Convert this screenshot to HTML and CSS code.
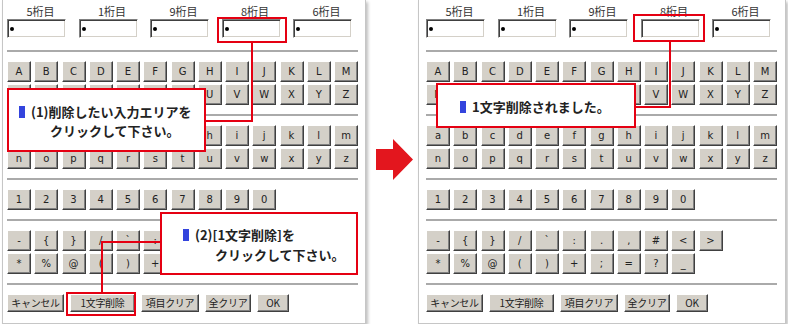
FILE: index.html
```html
<!DOCTYPE html>
<html lang="ja">
<head>
  <meta charset="UTF-8">
  <title>1文字削除の手順</title>
  <link rel="stylesheet" href="styles.css">
</head>
<body>
  <div class="steps">

    <!-- before -->
    <div class="panel panel-before">
      <div class="digits">
        <div class="digit"><div class="digit-label">5桁目</div><div class="digit-input"><span class="dot"></span></div></div>
        <div class="digit"><div class="digit-label">1桁目</div><div class="digit-input"><span class="dot"></span></div></div>
        <div class="digit"><div class="digit-label">9桁目</div><div class="digit-input"><span class="dot"></span></div></div>
        <div class="digit"><div class="digit-label">8桁目</div><div class="digit-input"><span class="dot"></span></div></div>
        <div class="digit"><div class="digit-label">6桁目</div><div class="digit-input"><span class="dot"></span></div></div>
      </div>
      <hr class="rule">
      <div class="key-row"><button class="key">A</button><button class="key">B</button><button class="key">C</button><button class="key">D</button><button class="key">E</button><button class="key">F</button><button class="key">G</button><button class="key">H</button><button class="key">I</button><button class="key">J</button><button class="key">K</button><button class="key">L</button><button class="key">M</button></div>
      <div class="key-row"><button class="key">N</button><button class="key">O</button><button class="key">P</button><button class="key">Q</button><button class="key">R</button><button class="key">S</button><button class="key">T</button><button class="key">U</button><button class="key">V</button><button class="key">W</button><button class="key">X</button><button class="key">Y</button><button class="key">Z</button></div>
      <hr class="rule">
      <div class="key-row"><button class="key">a</button><button class="key">b</button><button class="key">c</button><button class="key">d</button><button class="key">e</button><button class="key">f</button><button class="key">g</button><button class="key">h</button><button class="key">i</button><button class="key">j</button><button class="key">k</button><button class="key">l</button><button class="key">m</button></div>
      <div class="key-row"><button class="key">n</button><button class="key">o</button><button class="key">p</button><button class="key">q</button><button class="key">r</button><button class="key">s</button><button class="key">t</button><button class="key">u</button><button class="key">v</button><button class="key">w</button><button class="key">x</button><button class="key">y</button><button class="key">z</button></div>
      <hr class="rule">
      <div class="key-row"><button class="key">1</button><button class="key">2</button><button class="key">3</button><button class="key">4</button><button class="key">5</button><button class="key">6</button><button class="key">7</button><button class="key">8</button><button class="key">9</button><button class="key">0</button></div>
      <hr class="rule">
      <div class="key-row"><button class="key">-</button><button class="key">{</button><button class="key">}</button><button class="key">/</button><button class="key">`</button><button class="key">:</button><button class="key">.</button><button class="key">,</button><button class="key">#</button><button class="key">&lt;</button><button class="key">&gt;</button></div>
      <div class="key-row"><button class="key">*</button><button class="key">%</button><button class="key">@</button><button class="key">(</button><button class="key">)</button><button class="key">+</button><button class="key">;</button><button class="key">=</button><button class="key">?</button><button class="key">_</button></div>
      <hr class="rule">
      <div class="actions">
        <button class="btn btn-cancel">キャンセル</button>
        <button class="btn btn-delete">1文字削除</button>
        <button class="btn btn-clear">項目クリア</button>
        <button class="btn btn-all">全クリア</button>
        <button class="btn btn-ok">OK</button>
      </div>

      <div class="mark mark-input"></div>
      <div class="wire wire-1v"></div>
      <div class="wire wire-1h"></div>
      <div class="callout callout-1">
        <div class="callout-line line-1a"><span class="bullet"></span>(1)削除したい入力エリアを</div>
        <div class="callout-line line-1b">クリックして下さい。</div>
      </div>

      <div class="mark mark-delete"></div>
      <div class="wire wire-2v"></div>
      <div class="wire wire-2h"></div>
      <div class="callout callout-2">
        <div class="callout-line line-2a"><span class="bullet"></span>(2)[1文字削除]を</div>
        <div class="callout-line line-2b">クリックして下さい。</div>
      </div>
    </div>

    <div class="arrow">
      <svg width="37" height="41" viewBox="0 0 37 41"><polygon points="0,10 17,10 17,0 37,20.5 17,41 17,31 0,31" fill="#e3161e"/></svg>
    </div>

    <!-- after -->
    <div class="panel panel-after">
      <div class="digits">
        <div class="digit"><div class="digit-label">5桁目</div><div class="digit-input"><span class="dot"></span></div></div>
        <div class="digit"><div class="digit-label">1桁目</div><div class="digit-input"><span class="dot"></span></div></div>
        <div class="digit"><div class="digit-label">9桁目</div><div class="digit-input"><span class="dot"></span></div></div>
        <div class="digit"><div class="digit-label">8桁目</div><div class="digit-input"></div></div>
        <div class="digit"><div class="digit-label">6桁目</div><div class="digit-input"><span class="dot"></span></div></div>
      </div>
      <hr class="rule">
      <div class="key-row"><button class="key">A</button><button class="key">B</button><button class="key">C</button><button class="key">D</button><button class="key">E</button><button class="key">F</button><button class="key">G</button><button class="key">H</button><button class="key">I</button><button class="key">J</button><button class="key">K</button><button class="key">L</button><button class="key">M</button></div>
      <div class="key-row"><button class="key">N</button><button class="key">O</button><button class="key">P</button><button class="key">Q</button><button class="key">R</button><button class="key">S</button><button class="key">T</button><button class="key">U</button><button class="key">V</button><button class="key">W</button><button class="key">X</button><button class="key">Y</button><button class="key">Z</button></div>
      <hr class="rule">
      <div class="key-row"><button class="key">a</button><button class="key">b</button><button class="key">c</button><button class="key">d</button><button class="key">e</button><button class="key">f</button><button class="key">g</button><button class="key">h</button><button class="key">i</button><button class="key">j</button><button class="key">k</button><button class="key">l</button><button class="key">m</button></div>
      <div class="key-row"><button class="key">n</button><button class="key">o</button><button class="key">p</button><button class="key">q</button><button class="key">r</button><button class="key">s</button><button class="key">t</button><button class="key">u</button><button class="key">v</button><button class="key">w</button><button class="key">x</button><button class="key">y</button><button class="key">z</button></div>
      <hr class="rule">
      <div class="key-row"><button class="key">1</button><button class="key">2</button><button class="key">3</button><button class="key">4</button><button class="key">5</button><button class="key">6</button><button class="key">7</button><button class="key">8</button><button class="key">9</button><button class="key">0</button></div>
      <hr class="rule">
      <div class="key-row"><button class="key">-</button><button class="key">{</button><button class="key">}</button><button class="key">/</button><button class="key">`</button><button class="key">:</button><button class="key">.</button><button class="key">,</button><button class="key">#</button><button class="key">&lt;</button><button class="key">&gt;</button></div>
      <div class="key-row"><button class="key">*</button><button class="key">%</button><button class="key">@</button><button class="key">(</button><button class="key">)</button><button class="key">+</button><button class="key">;</button><button class="key">=</button><button class="key">?</button><button class="key">_</button></div>
      <hr class="rule">
      <div class="actions">
        <button class="btn btn-cancel">キャンセル</button>
        <button class="btn btn-delete">1文字削除</button>
        <button class="btn btn-clear">項目クリア</button>
        <button class="btn btn-all">全クリア</button>
        <button class="btn btn-ok">OK</button>
      </div>

      <div class="mark mark-input"></div>
      <div class="wire wire-3v"></div>
      <div class="wire wire-3h"></div>
      <div class="callout callout-3">
        <div class="callout-line line-3a"><span class="bullet"></span>1文字削除されました。</div>
      </div>
    </div>

  </div>
</body>
</html>
```

FILE: styles.css
```css
body {
  margin: 0;
  background: #fff;
  font-family: "Noto Sans CJK JP", sans-serif;
  color: #222;
}
.steps {
  display: flex;
  align-items: flex-start;
  padding-left: 2px;
}

/* panels */
.panel {
  position: relative;
  box-sizing: border-box;
  height: 324px;
  background: #fff;
  border: 1px solid #c6c6c6;
  border-top: none;
  box-shadow: 2px 2px 3px rgba(0,0,0,0.25);
  padding-top: 4px;
}
.panel-before {
  width: 364px;
  padding-left: 4px;
  padding-right: 7px;
}
.panel-after {
  width: 368px;
  padding-left: 7px;
  padding-right: 8px;
}
.arrow {
  margin: 139px 5px 0 10px;
  line-height: 0;
}

/* digit inputs */
.digits {
  display: grid;
  grid-template-columns: repeat(5, 67px);
  column-gap: 4.5px;
}
.digit-label {
  text-align: center;
  font-size: 11px;
  line-height: 14px;
  color: #333;
}
.digit-input {
  display: flex;
  align-items: center;
  box-sizing: border-box;
  width: 59px;
  height: 19px;
  margin-top: 1px;
  background: #fff;
  border: 1px solid;
  border-color: #808080 #fff #fff #808080;
  box-shadow: inset 1px 1px #404040, inset -1px -1px #d4d0c8;
}
.dot {
  width: 4px;
  height: 4px;
  margin-left: 2px;
  border-radius: 50%;
  background: #000;
}

.rule {
  height: 2px;
  margin: 12px 0 9px;
  border: none;
  background: #aaa;
}
.key-row + .rule {
  margin-top: 9px;
}

/* keyboard */
.key-row {
  display: flex;
  gap: 3.25px;
}
.key-row + .key-row {
  margin-top: 2px;
}
.key, .btn {
  box-sizing: border-box;
  padding: 0;
  background: #d4d0c8;
  border: 1px solid;
  border-color: #fff #404040 #404040 #fff;
  box-shadow: inset -1px -1px #808080;
  color: #222;
}
.key {
  width: 24px;
  height: 21px;
  font: 10px "DejaVu Sans", sans-serif;
}

.actions {
  display: flex;
  gap: 6px;
}
.btn {
  height: 18px;
  font: 10px/16px "Noto Sans CJK JP", sans-serif;
  letter-spacing: -0.3px;
}
.btn-cancel { width: 57px; }
.btn-delete { width: 65px; }
.btn-clear { width: 58px; }
.btn-all { width: 46px; }
.btn-ok { width: 32px; }

/* annotations */
.mark, .callout {
  position: absolute;
  box-sizing: border-box;
  border: 2px solid #e50012;
}
.callout {
  background: #fff;
  font-size: 13px;
  font-weight: bold;
  color: #222;
}
.callout-line {
  white-space: nowrap;
}
.bullet {
  display: inline-block;
  width: 6px;
  height: 12px;
  margin-right: 6px;
  vertical-align: -1px;
  background: #3344dd;
}
.wire {
  position: absolute;
  background: #e50012;
}

.panel-before .mark-input { left: 214px; top: 17px; width: 70px; height: 26px; }
.wire-1v { left: 248px; top: 43px; width: 2px; height: 79px; }
.wire-1h { left: 203px; top: 120px; width: 47px; height: 2px; }
.callout-1 { left: 4px; top: 88px; width: 199px; height: 64px; padding-top: 12px; line-height: 19px; }
.line-1a { padding-left: 10px; }
.line-1b { padding-left: 41px; }

.mark-delete { left: 63px; top: 292px; width: 70px; height: 24px; }
.wire-2v { left: 98px; top: 241px; width: 2px; height: 51px; }
.wire-2h { left: 98px; top: 241px; width: 60px; height: 2px; }
.callout-2 { left: 157px; top: 212px; width: 198px; height: 63px; padding-top: 11px; line-height: 20px; }
.line-2a { padding-left: 21px; }
.line-2b { padding-left: 53px; }

.panel-after .mark-input { left: 214px; top: 14px; width: 72px; height: 28px; }
.wire-3v { left: 250px; top: 42px; width: 2px; height: 66px; }
.wire-3h { left: 217px; top: 106px; width: 35px; height: 2px; }
.callout-3 { left: 17px; top: 83px; width: 200px; height: 45px; padding-top: 12px; line-height: 19px; }
.line-3a { padding-left: 22px; }
```
